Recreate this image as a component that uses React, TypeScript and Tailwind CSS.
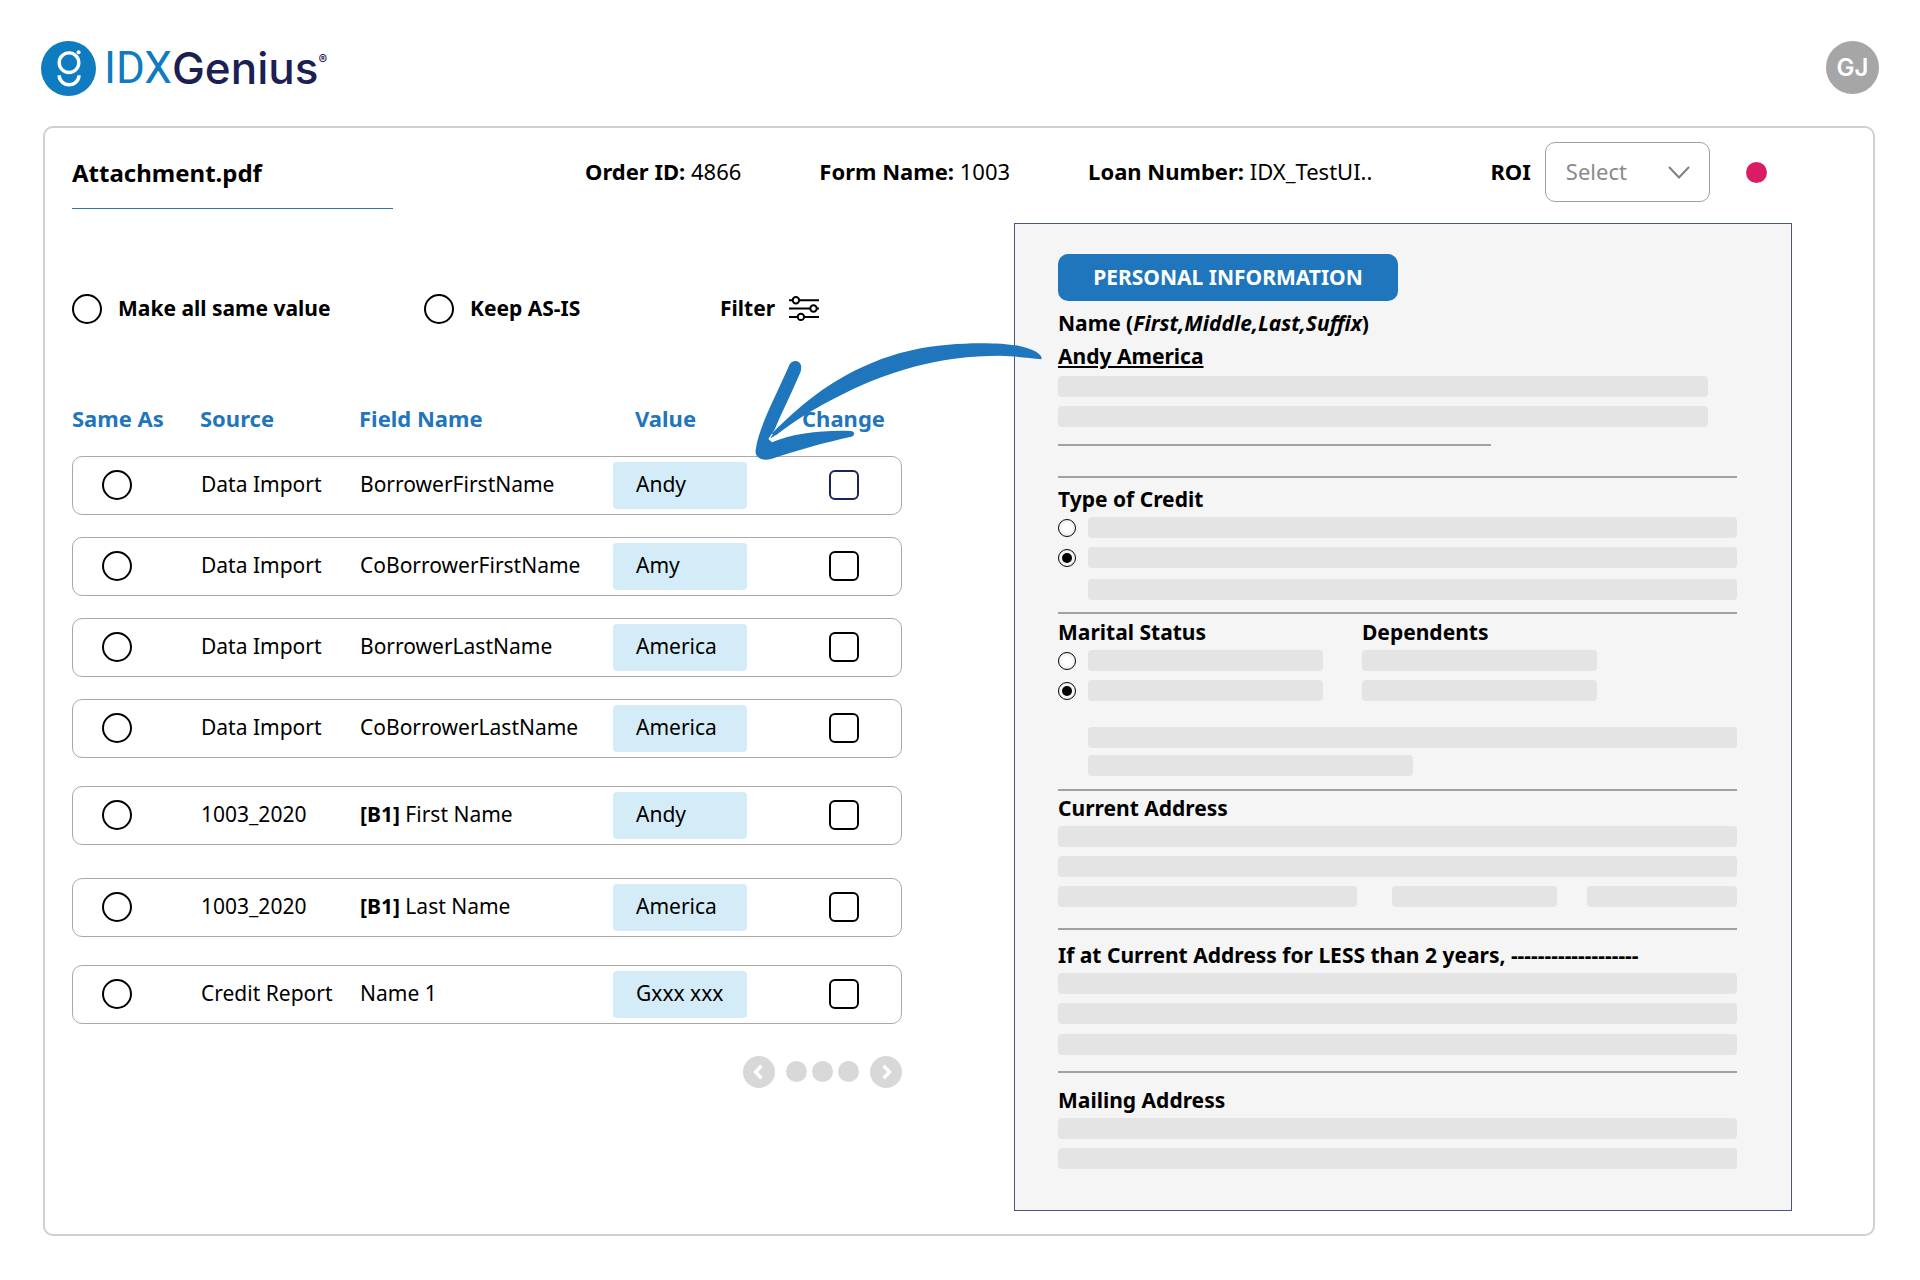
import { useState } from 'react';
import clsx from 'clsx';

interface FieldRow {
  id: string;
  source: string;
  tag?: string;
  field: string;
  value: string;
  spacing: string;
}

const rows: FieldRow[] = [
  { id: 'r1', source: 'Data Import', field: 'BorrowerFirstName', value: 'Andy', spacing: '' },
  { id: 'r2', source: 'Data Import', field: 'CoBorrowerFirstName', value: 'Amy', spacing: 'mt-[22px]' },
  { id: 'r3', source: 'Data Import', field: 'BorrowerLastName', value: 'America', spacing: 'mt-[22px]' },
  { id: 'r4', source: 'Data Import', field: 'CoBorrowerLastName', value: 'America', spacing: 'mt-[22px]' },
  { id: 'r5', source: '1003_2020', tag: '[B1]', field: 'First Name', value: 'Andy', spacing: 'mt-7' },
  { id: 'r6', source: '1003_2020', tag: '[B1]', field: 'Last Name', value: 'America', spacing: 'mt-[33px]' },
  { id: 'r7', source: 'Credit Report', field: 'Name 1', value: 'Gxxx xxx', spacing: 'mt-7' },
];

const columns = 'grid grid-cols-[128px_159px_276px_167px_1fr]';
const bigRadio =
  'size-[30px] shrink-0 appearance-none rounded-full border-2 border-black bg-white checked:border-8';

function Logo() {
  return (
    <a href="#" className="flex items-center gap-2">
      <svg viewBox="0 0 55 55" className="size-[55px]" aria-hidden="true">
        <circle cx="27.5" cy="27.5" r="27.5" fill="#0f7bc1" />
        <g fill="none" stroke="#fff" strokeWidth="3.4">
          <circle cx="28" cy="21.7" r="9.8" />
          <path d="M18.2 34.2a9.9 9.6 0 0 0 19.8 0" />
        </g>
        <circle cx="37.6" cy="11.2" r="2" fill="#fff" />
      </svg>
      <span className="flex text-[44px] leading-[55px]">
        <span className="font-[Roboto,sans-serif] text-[#0f7bc1]">IDX</span>
        <span className="font-[Inter,sans-serif] font-medium text-[#1b1f52]">Genius</span>
        <span className="pt-3 font-[Inter,sans-serif] text-[13px] leading-3 font-bold text-[#1b1f52]">®</span>
      </span>
    </a>
  );
}

function Meta({ label, value }: { label: string; value: string }) {
  return (
    <p className="pb-0.5 whitespace-nowrap">
      <b>{label}:</b> {value}
    </p>
  );
}

function FilterIcon() {
  return (
    <svg viewBox="0 0 30 25" className="h-[25px] w-[30px]" fill="none" stroke="#000" strokeWidth="2" aria-hidden="true">
      <path d="M0 4.3h3.4M10.4 4.3H30M0 12.5h21M28 12.5h2M0 20.9h8.4M15.4 20.9H30" />
      <circle cx="6.9" cy="4.3" r="3.2" />
      <circle cx="24.5" cy="12.5" r="3.2" />
      <circle cx="11.9" cy="20.9" r="3.2" />
    </svg>
  );
}

function Arrow() {
  return (
    <svg
      viewBox="165 66 864 360"
      className="pointer-events-none absolute top-[119px] left-[683px] z-10 h-[120px] w-[288px]"
      aria-hidden="true"
    >
      <g fill="#1f76bc">
        <path d="M1024 118C1030 104 1000 86 955 77C905 68 815 67 745 74C580 86 440 150 320 245C275 282 240 315 214 342L206 358L228 346C270 312 335 270 400 237C560 152 720 107 900 107C950 109 990 114 1024 118Z" />
        <path d="M268 135C276 118 298 119 303 136C306 150 300 160 294 173C272 225 245 277 225 326L206 358L216 367C280 340 370 330 452 333C465 334 466 346 454 350C380 366 300 388 213 417C190 424 163 415 167 390C175 325 222 240 268 135Z" />
      </g>
      <path d="M207 357L217 342M217 364L226 347" stroke="#fff" strokeWidth="4" />
    </svg>
  );
}

function Pager() {
  const round = 'flex size-8 items-center justify-center rounded-full bg-[#d8d8d8]';
  return (
    <nav className="mt-8 flex items-center justify-end" aria-label="Pages">
      <button className={round} aria-label="Previous">
        <svg viewBox="0 0 32 32" className="size-8" fill="none" stroke="#fff" strokeWidth="3.4">
          <path d="M18.5 9.8l-6 6.2 6 6.2" />
        </svg>
      </button>
      <div className="mx-[11px] flex gap-[5px]">
        <button className="size-[21px] rounded-full bg-[#d8d8d8]" aria-label="Page 1" />
        <button className="size-[21px] rounded-full bg-[#d8d8d8]" aria-label="Page 2" />
        <button className="size-[21px] rounded-full bg-[#d8d8d8]" aria-label="Page 3" />
      </div>
      <button className={round} aria-label="Next">
        <svg viewBox="0 0 32 32" className="size-8" fill="none" stroke="#fff" strokeWidth="3.4">
          <path d="M13.5 9.8l6 6.2-6 6.2" />
        </svg>
      </button>
    </nav>
  );
}

function FieldTable() {
  const [sameAs, setSameAs] = useState<string | null>(null);

  return (
    <table className="mt-[78px] block">
      <thead className="block">
        <tr className={clsx(columns, 'text-left text-[22px] leading-[30px] text-[#1f76bc]')}>
          <th>Same As</th>
          <th>Source</th>
          <th>Field Name</th>
          <th>Value</th>
          <th>Change</th>
        </tr>
      </thead>
      <tbody className="mt-[23px] block">
        {rows.map((row, i) => (
          <tr
            key={row.id}
            className={clsx(columns, 'h-[59px] items-center rounded-[10px] border border-[#a9a9a9]', row.spacing)}
          >
            <td className="flex pl-[29px]">
              <input
                type="radio"
                name="same-as"
                aria-label={`Same as ${row.field}`}
                checked={sameAs === row.id}
                onChange={() => setSameAs(row.id)}
                className={bigRadio}
              />
            </td>
            <td>{row.source}</td>
            <td>
              {row.tag && <b>{row.tag} </b>}
              {row.field}
            </td>
            <td className="-ml-[23px] flex h-[47px] w-[134px] items-center rounded bg-[#d3ecf8] pl-[23px]">
              {row.value}
            </td>
            <td className="flex pl-[26px]">
              <input
                type="checkbox"
                aria-label={`Change ${row.field}`}
                className={clsx(
                  'size-[30px] appearance-none rounded-md border-2 bg-white checked:border-8',
                  i === 0 ? 'border-[#1b2455]' : 'border-black',
                )}
              />
            </td>
          </tr>
        ))}
      </tbody>
    </table>
  );
}

function Bar({ className = 'w-full' }: { className?: string }) {
  return <div className={clsx('h-[21px] rounded bg-[#e4e4e4]', className)} />;
}

function Rule({ className }: { className?: string }) {
  return <hr className={clsx('border-t-2 border-[#a1a1a1]', className)} />;
}

function Option({ name, checked = false, children }: { name: string; checked?: boolean; children: React.ReactNode }) {
  return (
    <label className="flex items-center gap-3">
      <input
        type="radio"
        name={name}
        defaultChecked={checked}
        aria-label={name}
        className="size-[18px] shrink-0 appearance-none rounded-full border border-black bg-white bg-clip-content p-[3px] checked:bg-black"
      />
      {children}
    </label>
  );
}

function FormPreview() {
  return (
    <section className="border border-[#4b5680] bg-[#f5f5f5] pt-[30px] pr-[54px] pb-[41px] pl-[43px] leading-[30px]">
      <h2 className="flex h-[47px] w-[340px] items-center justify-center rounded-[10px] bg-[#1f76bc] pb-0.5 font-bold text-white">
        PERSONAL INFORMATION
      </h2>
      <h3 className="mt-[7px] font-bold">
        Name (<i>First,Middle,Last,Suffix</i>)
      </h3>
      <p className="mt-[3px] font-bold underline">Andy America</p>
      <Bar className="mt-[5px] w-[650px]" />
      <Bar className="mt-[9px] w-[650px]" />
      <Rule className="mt-[17px] w-[433px]" />

      <Rule className="mt-[30px]" />
      <h3 className="mt-1.5 font-bold">Type of Credit</h3>
      <div className="mt-[3px] space-y-[9px]">
        <Option name="credit-type">
          <Bar />
        </Option>
        <Option name="credit-type" checked>
          <Bar />
        </Option>
      </div>
      <div className="mt-[11px] pl-[30px]">
        <Bar />
      </div>

      <Rule className="mt-3" />
      <div className="mt-[3px] flex gap-[39px]">
        <div className="w-[265px]">
          <h3 className="font-bold">Marital Status</h3>
          <div className="mt-[3px] space-y-[9px]">
            <Option name="marital-status">
              <Bar />
            </Option>
            <Option name="marital-status" checked>
              <Bar />
            </Option>
          </div>
        </div>
        <div className="w-[235px]">
          <h3 className="font-bold">Dependents</h3>
          <Bar className="mt-[3px]" />
          <Bar className="mt-[9px]" />
        </div>
      </div>
      <div className="mt-[26px] pl-[30px]">
        <Bar />
        <Bar className="mt-[7px] w-1/2" />
      </div>

      <Rule className="mt-[13px]" />
      <h3 className="mt-0.5 font-bold">Current Address</h3>
      <Bar className="mt-[3px]" />
      <Bar className="mt-[9px]" />
      <div className="mt-[9px] flex justify-between">
        <Bar className="w-[299px]" />
        <Bar className="ml-1 w-[165px]" />
        <Bar className="w-[150px]" />
      </div>

      <Rule className="mt-[21px]" />
      <h3 className="mt-2.5 font-bold">If at Current Address for LESS than 2 years, -------------------</h3>
      <Bar className="mt-[3px]" />
      <Bar className="mt-[9px]" />
      <Bar className="mt-2.5" />

      <Rule className="mt-4" />
      <h3 className="mt-3 font-bold">Mailing Address</h3>
      <Bar className="mt-[3px]" />
      <Bar className="mt-[9px]" />
    </section>
  );
}

export default function App() {
  return (
    <div className="min-h-screen bg-white px-[41px] pt-[41px] pb-11 font-['Noto_Sans',sans-serif] text-[21px] text-black">
      <header className="flex items-start justify-between">
        <Logo />
        <button className="size-[53px] rounded-full bg-[#a6a6a6] font-[Inter,sans-serif] text-2xl font-semibold text-white">
          GJ
        </button>
      </header>

      <main className="mt-[30px] mr-1 ml-0.5 rounded-[10px] border-2 border-[#d0d0d0] pt-3.5 pr-[81px] pb-[23px] pl-[27px]">
        <div className="flex items-start">
          <h1 className="w-[321px] border-b border-[#2f78ae] pt-[13px] pb-[17px] text-2xl leading-9 font-bold">
            Attachment.pdf
          </h1>
          <div className="ml-48 flex h-[60px] flex-1 items-center gap-[78px] text-[22px]">
            <Meta label="Order ID" value="4866" />
            <Meta label="Form Name" value="1003" />
            <Meta label="Loan Number" value="IDX_TestUI.." />
            <div className="ml-10 flex items-center">
              <label htmlFor="roi" className="pb-0.5 font-bold">
                ROI
              </label>
              <div className="relative ml-3.5">
                <select
                  id="roi"
                  className="h-[60px] w-[165px] appearance-none rounded-[10px] border border-[#a0a0a0] bg-white pb-0.5 pl-5 text-[#8a8a8a]"
                >
                  <option>Select</option>
                </select>
                <svg
                  viewBox="0 0 22 13"
                  className="pointer-events-none absolute top-6 right-5 h-[13px] w-[22px]"
                  fill="none"
                  stroke="#808080"
                  strokeWidth="2"
                  aria-hidden="true"
                >
                  <path d="M1 1l10 10.5L21 1" />
                </svg>
              </div>
              <span className="ml-9 size-[21px] rounded-full bg-[#da1c66]" />
            </div>
          </div>
        </div>

        <div className="mt-3.5 grid grid-cols-[830fr_778fr] items-start gap-28">
          <section className="relative pt-[70px]">
            <div className="flex items-center font-bold">
              <label className="flex w-[352px] items-center gap-4">
                <input type="radio" name="mode" className={bigRadio} />
                Make all same value
              </label>
              <label className="flex w-[296px] items-center gap-4">
                <input type="radio" name="mode" className={bigRadio} />
                Keep AS-IS
              </label>
              <button className="flex items-center gap-3.5">
                Filter
                <FilterIcon />
              </button>
            </div>
            <FieldTable />
            <Pager />
            <Arrow />
          </section>
          <FormPreview />
        </div>
      </main>
    </div>
  );
}
